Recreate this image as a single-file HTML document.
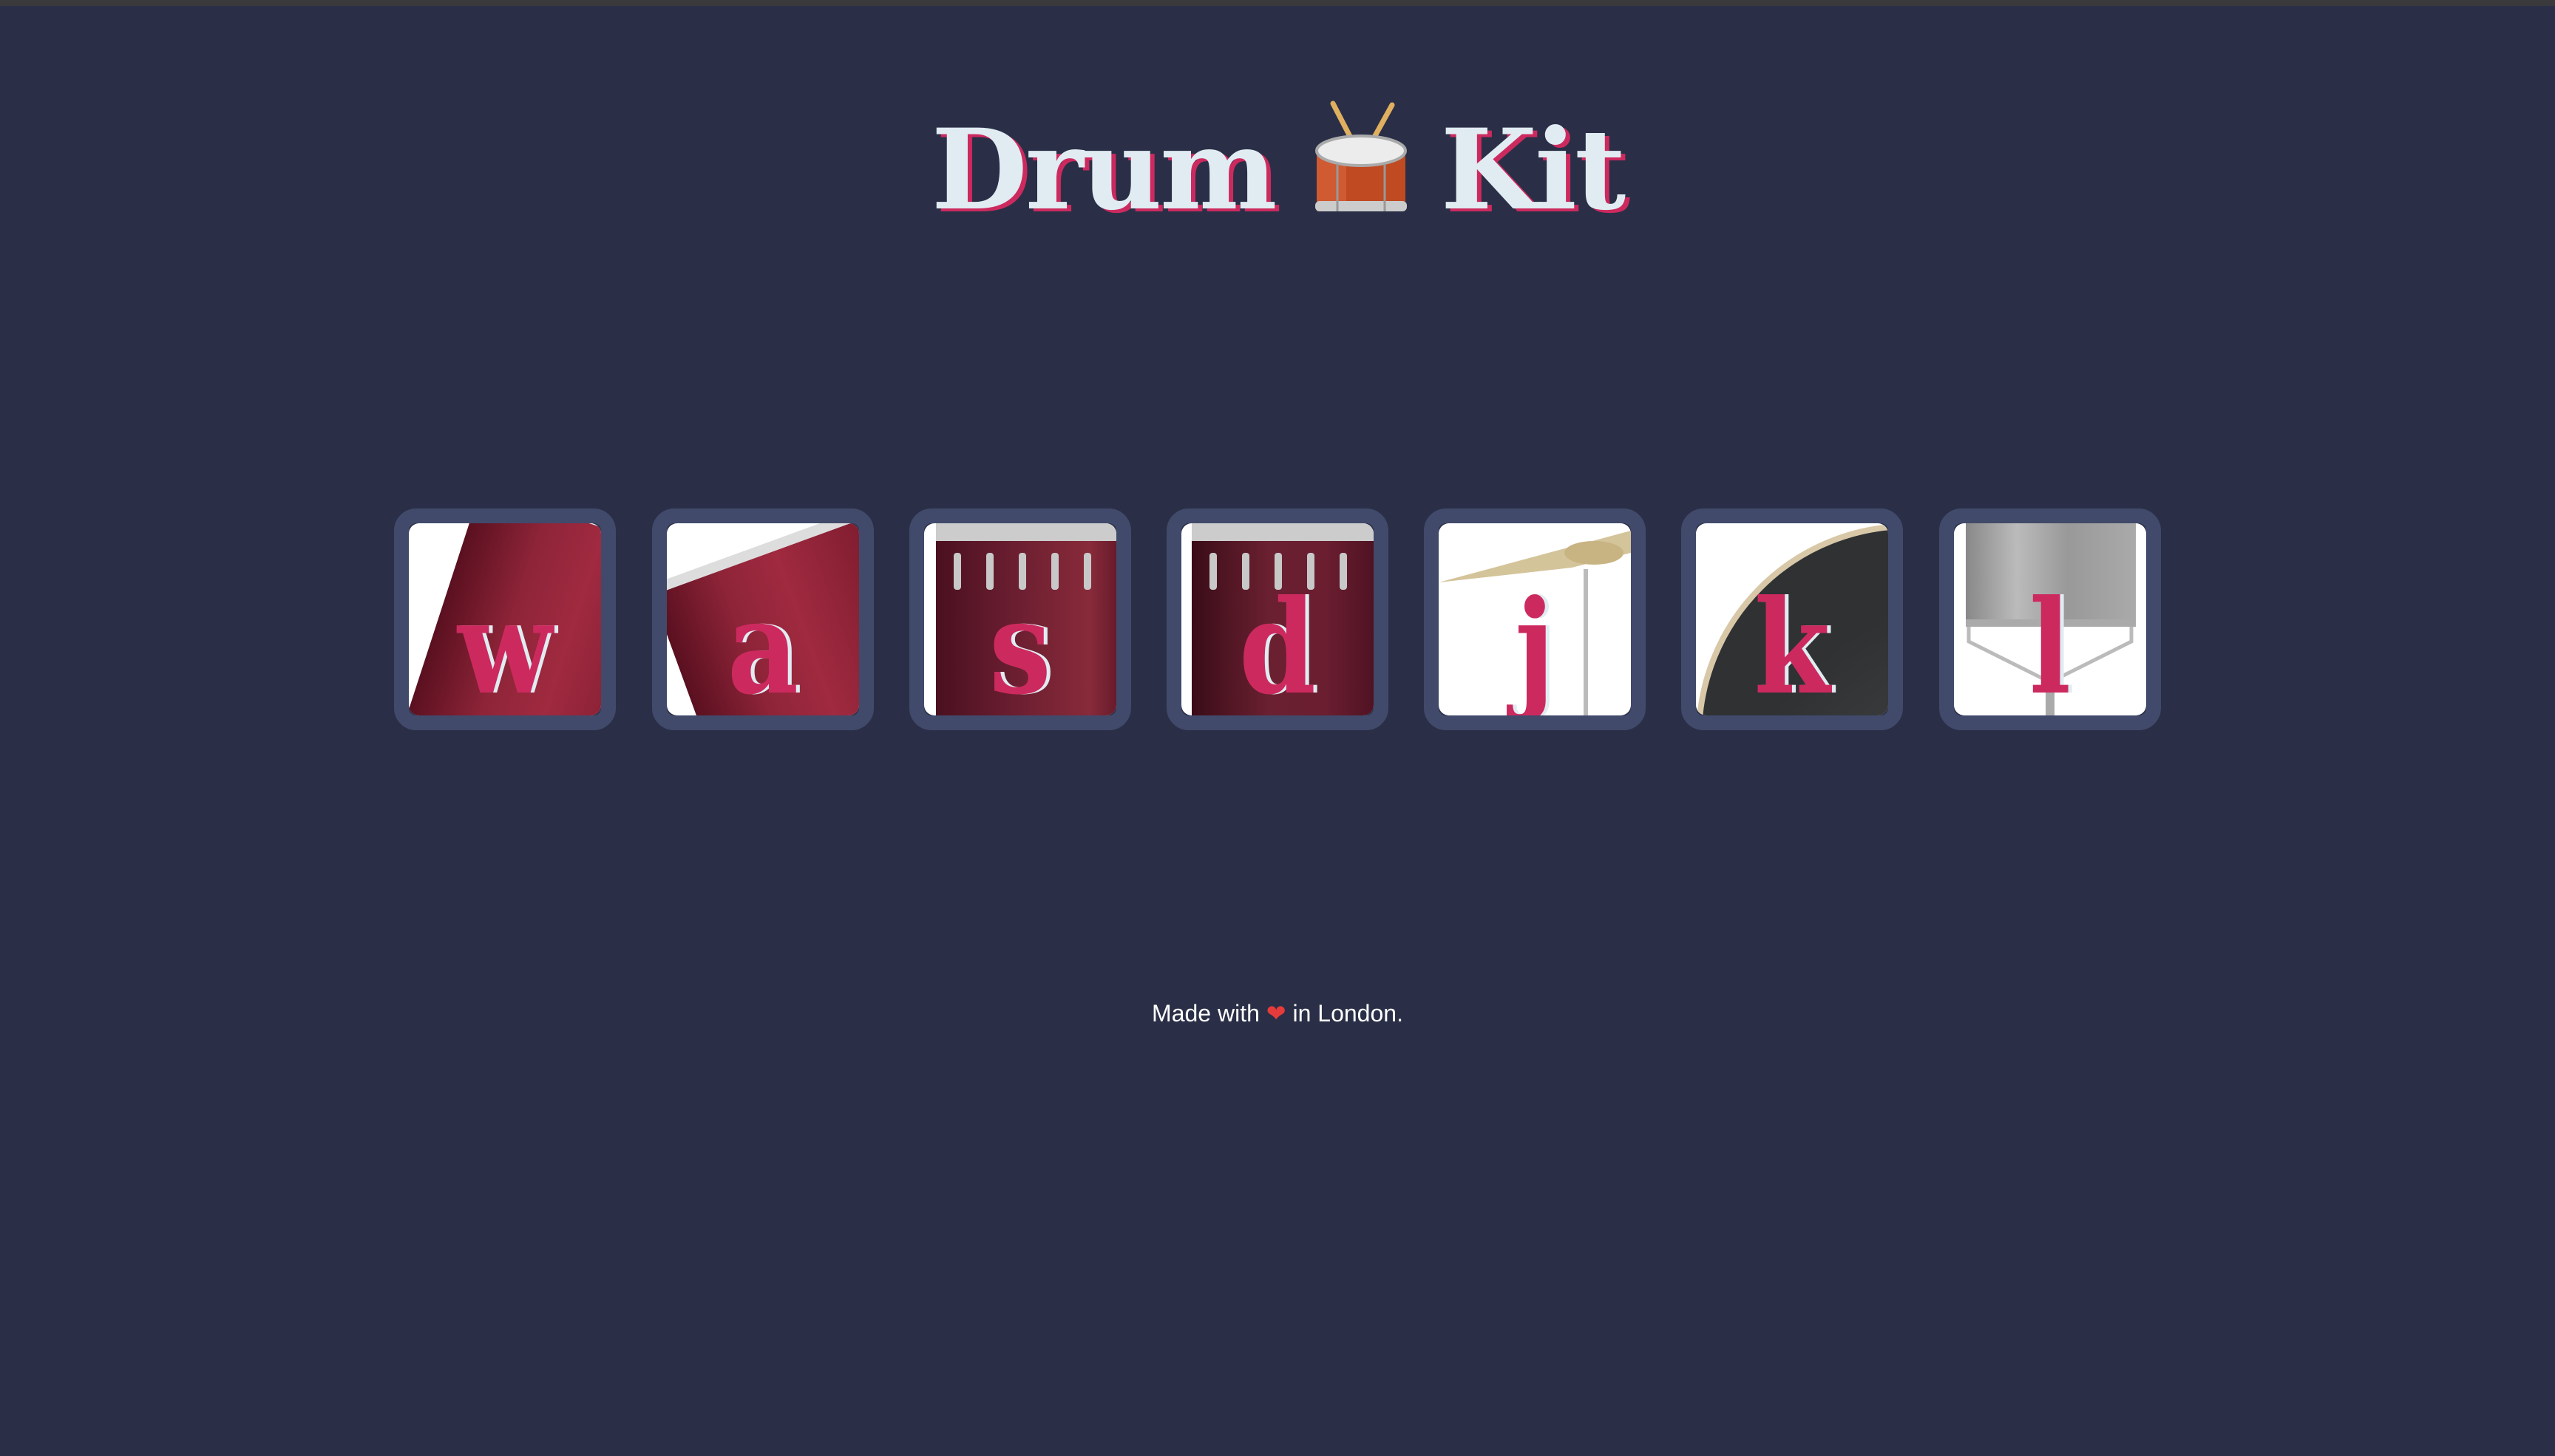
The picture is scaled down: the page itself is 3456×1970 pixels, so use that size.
<!DOCTYPE html>
<html><head><meta charset="utf-8"><style>
html,body{margin:0;padding:0}
body{width:3456px;height:1970px;background:#2a2f47;position:relative;overflow:hidden;font-family:"Liberation Sans",sans-serif}
.top{position:absolute;left:0;top:0;width:100%;height:8px;background:#3a3a3c}
h1{position:absolute;left:0;width:100%;top:130px;margin:0;text-align:center;font-family:"DejaVu Serif","Liberation Serif",serif;font-weight:bold;font-size:150px;color:#e0ecf2;text-shadow:6px 4px 0 #cc2a5f;letter-spacing:-3px;line-height:200px}
.drum{display:inline-block;vertical-align:-10px;width:132px;height:156px;position:relative;margin:0 42px 0 50px}
.key{position:absolute;top:688px;width:260px;height:260px;border:20px solid #414a6b;border-radius:30px;overflow:hidden}
.in{position:absolute;inset:0;background:#fff;border-radius:14px;overflow:hidden}
.let{position:absolute;left:0;width:100%;top:69px;text-align:center;font-family:"DejaVu Serif","Liberation Serif",serif;font-weight:bold;font-size:175px;line-height:200px;color:#cc2a5f;text-shadow:6px 0 0 #e0ecf2;transform:scaleX(0.85)}
.red{position:absolute;background:linear-gradient(90deg,#5a1020,#8e2438 30%,#a02a40 55%,#7a1a2c);}
.lug{position:absolute;width:10px;height:50px;background:#c8c8c8;border-radius:4px}
.foot{position:absolute;left:0;width:100%;top:1352px;text-align:center;color:#fff;font-size:32px}
</style></head><body>
<div class="top"></div>
<h1>Drum<span class="drum"><svg width="132" height="156" viewBox="0 0 132 156"><line x1="28" y1="4" x2="58" y2="62" stroke="#e0b060" stroke-width="7" stroke-linecap="round"/><line x1="108" y1="6" x2="76" y2="64" stroke="#e0b060" stroke-width="7" stroke-linecap="round"/><rect x="6" y="66" width="120" height="84" rx="12" fill="#c04a22"/><rect x="6" y="66" width="40" height="84" fill="#e06a40" opacity=".5"/><ellipse cx="66" cy="68" rx="60" ry="20" fill="#ececec" stroke="#aaa" stroke-width="4"/><rect x="4" y="136" width="124" height="14" rx="6" fill="#ccc"/><line x1="34" y1="86" x2="34" y2="150" stroke="#999" stroke-width="3"/><line x1="98" y1="86" x2="98" y2="150" stroke="#999" stroke-width="3"/></svg></span>Kit</h1>

<div class="key" style="left:533px"><div class="in">
<div class="red" style="left:40px;top:-20px;width:320px;height:320px;transform:rotate(18deg);border-top:14px solid #ddd;border-bottom:14px solid #ddd"></div>
<div class="let">w</div></div></div>

<div class="key" style="left:882px"><div class="in">
<div class="red" style="left:20px;top:20px;width:320px;height:300px;transform:rotate(-20deg);border-top:14px solid #ddd"></div>
<div class="let">a</div></div></div>

<div class="key" style="left:1230px"><div class="in">
<div class="red" style="left:16px;top:0;width:260px;height:260px;border-top:24px solid #ccc;background:linear-gradient(90deg,#4a1020,#6a1e30 40%,#882a3a 80%,#5a1525)"></div>
<div class="lug" style="left:40px;top:40px"></div><div class="lug" style="left:84px;top:40px"></div><div class="lug" style="left:128px;top:40px"></div><div class="lug" style="left:172px;top:40px"></div><div class="lug" style="left:216px;top:40px"></div>
<div class="let">s</div></div></div>

<div class="key" style="left:1578px"><div class="in">
<div class="red" style="left:14px;top:0;width:260px;height:260px;border-top:24px solid #ccc;background:linear-gradient(90deg,#3a0c18,#6a2030 40%,#6a1e30 70%,#4a1020)"></div>
<div class="lug" style="left:38px;top:40px"></div><div class="lug" style="left:82px;top:40px"></div><div class="lug" style="left:126px;top:40px"></div><div class="lug" style="left:170px;top:40px"></div><div class="lug" style="left:214px;top:40px"></div>
<div class="let">d</div></div></div>

<div class="key" style="left:1926px"><div class="in">
<svg width="260" height="260" style="position:absolute;left:0;top:0"><polygon points="0,80 260,10 260,40 180,60" fill="#d4c49a"/><ellipse cx="210" cy="40" rx="40" ry="16" fill="#c8b482"/><rect x="196" y="62" width="6" height="200" fill="#bbb"/></svg>
<div class="let">j</div></div></div>

<div class="key" style="left:2274px"><div class="in">
<div style="position:absolute;left:0;top:0;width:560px;height:560px;border-radius:50%;border:8px solid #d8c8a8;background:radial-gradient(circle at 70% 80%,#4a4a4a,#2f3133 60%)"></div>
<div class="let">k</div></div></div>

<div class="key" style="left:2623px"><div class="in">
<div style="position:absolute;left:16px;top:0;width:230px;height:130px;background:linear-gradient(90deg,#888,#bbb 30%,#999 60%,#aaa);border-bottom:10px solid #aaa"></div>
<svg width="260" height="260" style="position:absolute;left:0;top:0"><polyline points="20,140 20,160 130,215 240,160 240,140" fill="none" stroke="#bbb" stroke-width="5"/><rect x="124" y="200" width="12" height="60" fill="#aaa"/></svg>
<div class="let">l</div></div></div>

<div class="foot">Made with <span style="color:#e53b3b">❤</span> in London.</div>
</body></html>
